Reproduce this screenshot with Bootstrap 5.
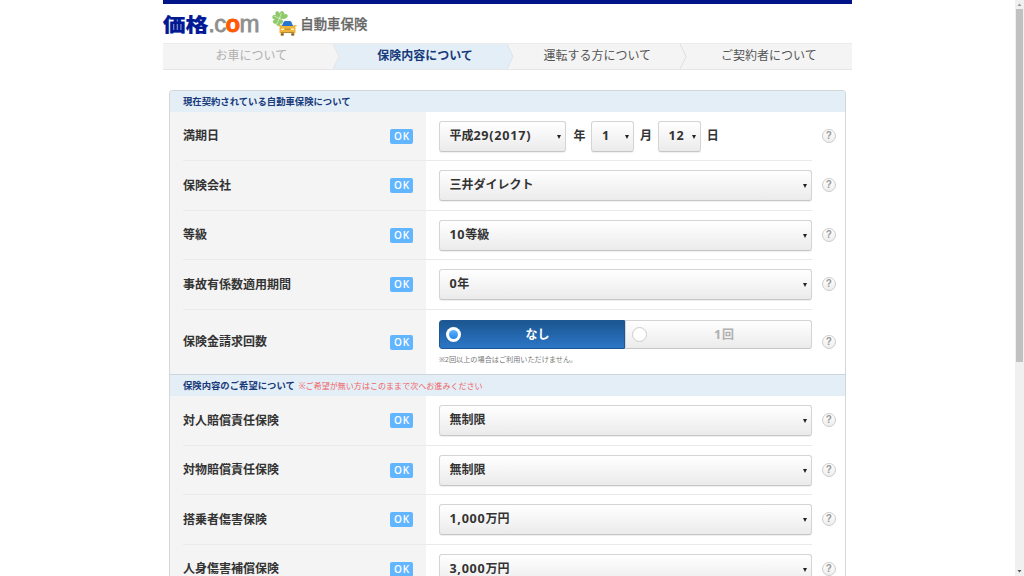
<!DOCTYPE html>
<html lang="ja">
<head>
<meta charset="utf-8">
<meta name="viewport" content="width=device-width, initial-scale=1">
<title>価格.com 自動車保険</title>
<link href="https://cdn.jsdelivr.net/npm/bootstrap@5.3.0/dist/css/bootstrap.min.css" rel="stylesheet">
<style>
html,body{height:100%;overflow:hidden}
body{font-family:"Noto Sans","Noto Sans CJK JP",sans-serif;font-size:12px;line-height:16px;color:#333;background:#fff}
.page-area{padding-left:162.7px;height:576px;overflow:hidden}
.main-wrap{width:689.5px}
.top-bar{height:4.3px;background:#001489}
.site-head{height:38.7px}
.logo-kk{font-family:"Noto Sans CJK JP",sans-serif;font-weight:900;font-size:22.8px;line-height:24px;color:#001a96;-webkit-text-stroke:.2px #001a96}
.logo-kk span{display:inline-block;transform:scaleY(.86)}
.logo-com{font-family:"Liberation Sans",sans-serif;font-size:24px;line-height:24px;color:#8f8f8f;-webkit-text-stroke:.8px #8f8f8f;letter-spacing:-.7px}
.logo-com b{color:#ff5a00;-webkit-text-stroke-color:#ff5a00}
.logo-sub{font-size:13.4px;font-weight:500;color:#666;-webkit-text-stroke:.25px #666}
.steps{height:27px;background:#f4f4f4;border-top:1px solid #ebebeb;border-bottom:1px solid #e6e6e6;color:#555}
.step-name{height:25px}
.step-arrow{width:7px;height:25px;display:block}
.form-box{width:677px;margin:20.5px 0 0 6.3px;border:1px solid #d2d7db;border-bottom:0;border-radius:4px 4px 0 0;overflow:hidden;height:485.5px}
.sec-head{height:20.5px;background:#e4eef7;color:#163a7a;font-size:9.35px;font-weight:700;padding-left:13px}
.sec-head.second{height:22px;border-top:1px solid #cfd5da}
.sec-head .hint{font-size:8.05px;font-weight:400;color:#f06464;margin-left:4px}
.form-rows{background:linear-gradient(to right,#f4f4f4 256.3px,#fff 256.3px);padding:0 33.2px 0 13px}
.form-line{height:49.5px;border-bottom:1px solid #eaeaea}
.form-line.tall{height:64.3px;border:0}
.label-col{width:230.3px;margin-right:25.6px;font-weight:700}
.ok-tag{width:23.5px;height:15px;border-radius:2px;background:#62b5ff;color:#fff;font:600 10px/15px "Open Sans",sans-serif;letter-spacing:.8px;padding-left:1px}
.pick{height:31px;border:1px solid #d4d4d4;border-bottom-color:#c6c6c6;border-radius:3px;background:linear-gradient(#fff,#ebebeb);box-shadow:0 1px 1px #0001;font-weight:700;padding:0 4px 1px 9.5px}
.pick::after{content:"";border:2px solid transparent;border-top:4px solid #222;border-bottom:0;margin-top:2px}
.num{font-size:12.6px;letter-spacing:.75px}
.year-pick{width:127.5px}.small-pick{width:42.7px}
.unit{font-weight:700;padding-bottom:1px}
.help{right:-24px;top:50%;width:14px;height:14px;margin-top:-7.500px;border:1px solid #ccc;border-radius:50%;background:linear-gradient(#fff,#eee);font:700 10px/12px "Liberation Sans",sans-serif;color:#999;text-align:center}
.choices{height:29.5px}
.choice{height:29.5px;font-weight:700;border:1px solid #d4d4d4;border-bottom-color:#c6c6c6;border-radius:0 3px 3px 0;background:linear-gradient(#fff,#ebebeb);color:#b0b0b0;padding:0 6px 0}
.choice.on{border-color:#1d5794;border-radius:3px 0 0 3px;background:linear-gradient(#1b5690,#2c76c7);color:#fff}
.radio-dot{width:15px;height:15px;border:1.4px solid #ccc;border-radius:50%;background:#fff}
.choice.on .radio-dot{border:0;padding:3px;background:linear-gradient(#62b5ff,#2485e8) content-box,#fff}
.choice.on .radio-dot::before{content:none}
.dot-fill{width:9px;height:9px;border-radius:50%;background:linear-gradient(#62b5ff,#2485e8)}
.choice.on .radio-dot{background:#fff}
.note{font-size:7.15px;line-height:10px;color:#777;margin-top:5px}
.scroll-track{width:9.4px;height:576px;background:#f0f0f0}
.scroll-thumb{width:7px;height:353px;background:#c1c1c1}
</style>
</head>
<body class="d-flex justify-content-between">
<div class="page-area">
<main class="main-wrap">
<div class="top-bar"></div>
<header class="site-head d-flex align-items-center">
<div class="logo-kk"><span>価格</span></div>
<div class="logo-com">.c<b>o</b>m</div>
<svg width="26" height="25" viewBox="0 0 26 25" style="margin:0 2px 0 13.500px">
<g fill="#8fca6a"><ellipse cx="6" cy="3.700" rx="2.300" ry="3.600" transform="rotate(-22 6 3.700)"/><ellipse cx="10" cy="3.700" rx="2.300" ry="3.600" transform="rotate(8 10 3.700)"/><ellipse cx="12.500" cy="5.500" rx="2.200" ry="3.400" transform="rotate(65 12.500 5.500)"/><ellipse cx="3.800" cy="6.500" rx="2.200" ry="3.600" transform="rotate(-75 3.800 6.500)"/><ellipse cx="4.200" cy="10" rx="2.200" ry="3.500" transform="rotate(60 4.200 10)"/><ellipse cx="6.800" cy="11.500" rx="2.200" ry="3.500" transform="rotate(20 6.800 11.500)"/><path d="m8 7 2 0 2 7-2 2z"/></g>
<path d="m2 5 11 5M9.500 2 5 13" stroke="#fff" stroke-width=".7" opacity=".7"/>
<path d="m9 16.500 2.300-5.500q.5-1.300 2-1.300h4.400q1.500 0 2 1.300l2.300 5.500z" fill="#2975cc" stroke="#fff" stroke-width="1"/>
<path d="M7.500 17q0-2 2-2h12q2 0 2 2v5h-16zM8.500 21h3.500v3.500H8.500zM19 21h3.500v3.500H19zM6.500 14h3v1.500h-3zM21.500 14h3v1.500h-3z" fill="#efb43c"/>
<path d="m10 15 1.800-4q.4-.8 1.500-.8h4.400q1.100 0 1.500.8l1.800 4z" fill="#2975cc"/>
<path d="M9 17.500h3V19H9zM19 17.500h3V19h-3z" fill="#fff2b0"/><path d="M13 18.200h5M9 21.500h13" stroke="#a77b2c" stroke-width=".8"/><path d="M9 22.500h2.500v2H9zM19.500 22.500H22v2h-2.500z" fill="#6e6045"/>
</svg>
<div class="logo-sub">自動車保険</div>
</header>
<nav class="steps d-flex">
<div class="step-name d-flex align-items-center justify-content-center" style="width:170.300px;padding-left:7px;color:#b0b0b0">お車について</div>
<svg class="step-arrow" viewBox="0 0 7 25"><path d="M0 0h7v25H0l6-12.500z" fill="#e4eef7"/><path d="m0 0 6 12.500L0 25" fill="none" stroke="#e2e5e8"/></svg>
<div class="step-name d-flex align-items-center justify-content-center fw-bold" style="width:167px;padding-left:3px;background:#e4eef7;color:#163a7a">保険内容について</div>
<svg class="step-arrow" viewBox="0 0 7 25"><path d="m0 0 6 12.500L0 25z" fill="#e4eef7"/><path d="m0 0 6 12.500L0 25" fill="none" stroke="#dce4eb"/></svg>
<div class="step-name d-flex align-items-center justify-content-center" style="width:166.500px">運転する方について</div>
<svg class="step-arrow" viewBox="0 0 7 25"><path d="m0 0 6 12.500L0 25" fill="none" stroke="#dedede"/></svg>
<div class="step-name d-flex align-items-center justify-content-center flex-fill" style="padding-right:2px">ご契約者について</div>
</nav>
<section class="form-box">
<div class="sec-head d-flex align-items-center">現在契約されている自動車保険について</div>
<div class="form-rows">
<div class="form-line d-flex align-items-center position-relative"><div class="label-col d-flex align-items-center justify-content-between"><span>満期日</span><span class="ok-tag text-center">OK</span></div>
<div class="d-flex align-items-center"><div class="pick year-pick d-flex align-items-center justify-content-between"><span>平成<span class="num">29(2017)</span></span></div><span class="unit" style="margin:0 6px 0 7px">年</span><div class="pick small-pick d-flex align-items-center justify-content-between"><span class="num">1</span></div><span class="unit" style="margin:0 6px">月</span><div class="pick small-pick d-flex align-items-center justify-content-between"><span class="num">12</span></div><span class="unit" style="margin-left:6px">日</span></div><span class="help position-absolute">?</span></div>
<div class="form-line d-flex align-items-center position-relative"><div class="label-col d-flex align-items-center justify-content-between"><span>保険会社</span><span class="ok-tag text-center">OK</span></div><div class="pick flex-fill d-flex align-items-center justify-content-between"><span>三井ダイレクト</span></div><span class="help position-absolute">?</span></div>
<div class="form-line d-flex align-items-center position-relative"><div class="label-col d-flex align-items-center justify-content-between"><span>等級</span><span class="ok-tag text-center">OK</span></div><div class="pick flex-fill d-flex align-items-center justify-content-between"><span><span class="num">10</span>等級</span></div><span class="help position-absolute">?</span></div>
<div class="form-line d-flex align-items-center position-relative"><div class="label-col d-flex align-items-center justify-content-between"><span>事故有係数適用期間</span><span class="ok-tag text-center">OK</span></div><div class="pick flex-fill d-flex align-items-center justify-content-between"><span><span class="num">0</span>年</span></div><span class="help position-absolute">?</span></div>
<div class="form-line tall d-flex align-items-center position-relative"><div class="label-col d-flex align-items-center justify-content-between"><span>保険金請求回数</span><span class="ok-tag text-center">OK</span></div>
<div class="flex-fill"><div class="choices d-flex"><div class="choice on w-50 d-flex align-items-center"><span class="radio-dot d-flex"><span class="dot-fill"></span></span><span class="flex-fill text-center" style="padding-right:4px">なし</span></div><div class="choice w-50 d-flex align-items-center"><span class="radio-dot"></span><span class="flex-fill text-center" style="padding-right:4px"><span class="num">1</span>回</span></div></div><div class="note">※2回以上の場合はご利用いただけません。</div></div><span class="help position-absolute">?</span></div>
</div>
<div class="sec-head second d-flex align-items-center">保険内容のご希望について<span class="hint">※ご希望が無い方はこのままで次へお進みください</span></div>
<div class="form-rows">
<div class="form-line d-flex align-items-center position-relative"><div class="label-col d-flex align-items-center justify-content-between"><span>対人賠償責任保険</span><span class="ok-tag text-center">OK</span></div><div class="pick flex-fill d-flex align-items-center justify-content-between"><span>無制限</span></div><span class="help position-absolute">?</span></div>
<div class="form-line d-flex align-items-center position-relative"><div class="label-col d-flex align-items-center justify-content-between"><span>対物賠償責任保険</span><span class="ok-tag text-center">OK</span></div><div class="pick flex-fill d-flex align-items-center justify-content-between"><span>無制限</span></div><span class="help position-absolute">?</span></div>
<div class="form-line d-flex align-items-center position-relative"><div class="label-col d-flex align-items-center justify-content-between"><span>搭乗者傷害保険</span><span class="ok-tag text-center">OK</span></div><div class="pick flex-fill d-flex align-items-center justify-content-between"><span><span class="num">1,000</span>万円</span></div><span class="help position-absolute">?</span></div>
<div class="form-line d-flex align-items-center position-relative"><div class="label-col d-flex align-items-center justify-content-between"><span>人身傷害補償保険</span><span class="ok-tag text-center">OK</span></div><div class="pick flex-fill d-flex align-items-center justify-content-between"><span><span class="num">3,000</span>万円</span></div><span class="help position-absolute">?</span></div>
</div>
</section>
</main>
</div>
<aside class="scroll-track d-flex flex-column align-items-center">
<svg width="9" height="9" viewBox="0 0 9 9"><path d="M2.500 6 4.500 3.500 6.500 6z" fill="#999"/></svg>
<div class="scroll-thumb"></div>
<svg class="mt-auto" width="9" height="9" viewBox="0 0 9 9"><path d="M2.500 3h4L4.500 5.500z" fill="#555"/></svg>
</aside>
<script src="https://cdn.jsdelivr.net/npm/bootstrap@5.3.0/dist/js/bootstrap.bundle.min.js"></script>
</body>
</html>
